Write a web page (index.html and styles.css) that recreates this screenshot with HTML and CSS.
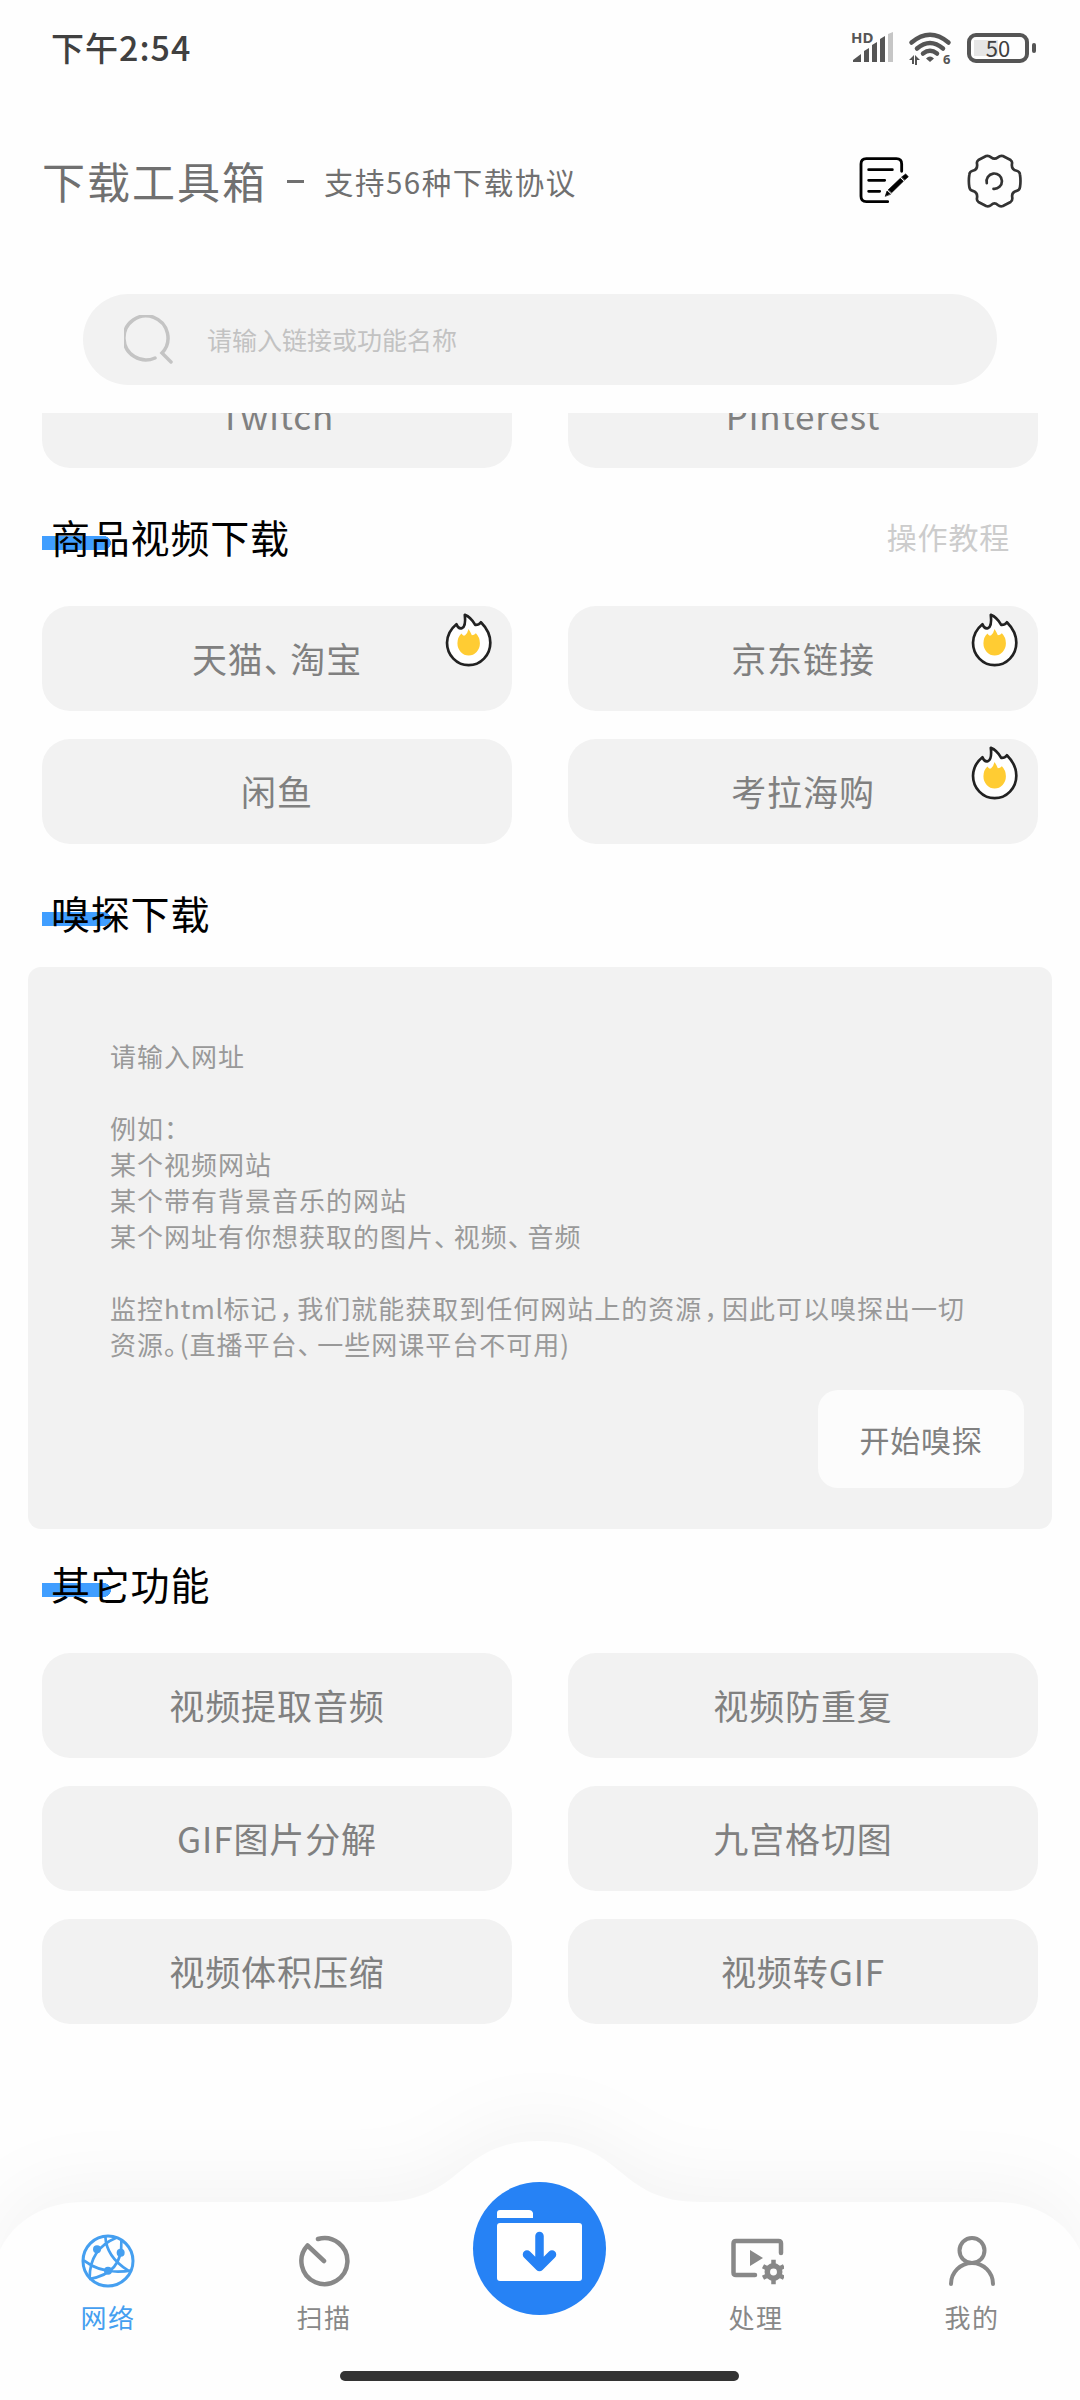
FILE: index.html
```html
<!DOCTYPE html>
<html lang="zh-CN">

<head>
    <meta charset="UTF-8">
    <meta name="viewport" content="width=device-width, initial-scale=1.0">
    <title>下载工具箱</title>
    <link rel="stylesheet" href="styles.css">
</head>

<body>
    <div class="app">
        <div class="status-bar">
            <span class="time">下午<span class="digits">2:54</span></span>
            <div class="status-icons">
                <svg class="signal" viewBox="0 0 42 34">
                    <text x="-1" y="12" class="hd">HD</text>
                    <path d="M1 31v-2l8-6v8z M12 31V20l5-3v14z M20 31V14l5-3v20z M28 31V8l5-3v26z" fill="#555"/>
                    <path d="M36 31V3l5-2v30z" fill="#c6c6c6"/>
                </svg>
                <svg class="wifi" viewBox="0 0 42 34">
                    <g fill="none" stroke="#555" stroke-width="4.500" stroke-linecap="round">
                        <path d="M2.500 11.500Q21-4 39.500 11.500"/>
                        <path d="M8 17.500Q21 6.500 34 17.500"/>
                        <path d="M14 22.500Q21 17 28 22.500"/>
                    </g>
                    <path d="M17 27.500Q21 23.500 25 27.500L21 31z" fill="#555"/>
                    <path d="M0 29l5-5v9h-2v-4z M6 24l5 5h-3v5h-2z" fill="#555"/>
                    <text x="34" y="33" class="six">6</text>
                </svg>
                <div class="battery"><span>50</span></div>
            </div>
        </div>

        <header class="header">
            <h1>下载工具箱</h1>
            <span class="dash"></span>
            <span class="subtitle">支持56种下载协议</span>
            <svg class="edit" viewBox="58 408 150 150" fill="none" stroke="#000" stroke-width="8.500" stroke-linecap="round">
                <path d="M186 454V432Q186 416 170 416H80Q64 416 64 432V529Q64 545 80 545H144"/>
                <path d="M87 449H158M87 481H135M87 514H120"/>
                <path d="M146 509L182 475L191 484L156 518Z M186 471L198 462L206 470L195 480Z M137 528L142 513L152 522Z" fill="#000" stroke="#000" stroke-width="2"/>
            </svg>
            <svg class="gear" viewBox="380 400 170 170" fill="none" stroke="#333" stroke-width="8" stroke-linecap="round" stroke-linejoin="round">
                <path d="M440 409Q448 407 455 413Q465 421 475 413Q482 407 490 409L513 421Q519 425 517 433Q515 450 531 453Q540 455 541 464Q544 484 541 502Q540 511 531 513Q515 517 518 533Q519 542 513 546L490 558Q482 561 475 555Q465 546 455 555Q448 561 440 558L417 546Q411 542 413 533Q415 517 400 513Q391 511 390 502Q387 484 390 464Q391 455 400 453Q415 450 413 433Q411 425 417 421Z"/>
                <path d="M442 490A23 23 0 1 1 462 507"/>
            </svg>
        </header>

        <div class="search">
            <svg viewBox="0 0 50 50" fill="none" stroke="#c4c4c4" stroke-width="3.500" stroke-linecap="round">
                <path d="M31 43A22 22 0 1 1 38 38L47 47"/>
            </svg>
            <span>请输入链接或功能名称</span>
        </div>

        <main class="content">
            <div class="grid cut">
                <div class="item">Twitch</div>
                <div class="item">Pinterest</div>
            </div>

            <div class="title">
                <h2>商品视频下载</h2>
                <span class="more">操作教程</span>
            </div>
            <div class="grid">
                <div class="item">天猫<span class="pause">、</span>淘宝<svg class="hot"><use href="#flame"/></svg></div>
                <div class="item">京东链接<svg class="hot"><use href="#flame"/></svg></div>
                <div class="item">闲鱼</div>
                <div class="item">考拉海购<svg class="hot"><use href="#flame"/></svg></div>
            </div>

            <div class="title">
                <h2>嗅探下载</h2>
            </div>
            <div class="sniff">
                <p>请输入网址<br><br>例如：<br>某个视频网站<br>某个带有背景音乐的网站<br>某个网址有你想获取的图片<span class="pause">、</span>视频<span class="pause">、</span>音频<br><br>监控<span class="latin">html</span>标记<span class="comma">，</span>我们就能获取到任何网站上的资源<span class="comma">，</span>因此可以嗅探出一切<br>资源<span class="stop">。</span>(直播平台<span class="pause">、</span>一些网课平台不可用)</p>
                <div class="sniff-btn">开始嗅探</div>
            </div>

            <div class="title">
                <h2>其它功能</h2>
            </div>
            <div class="grid">
                <div class="item">视频提取音频</div>
                <div class="item">视频防重复</div>
                <div class="item">GIF图片分解</div>
                <div class="item">九宫格切图</div>
                <div class="item">视频体积压缩</div>
                <div class="item">视频转GIF</div>
            </div>
        </main>

        <nav class="tabbar">
            <svg class="tabbar-bg" viewBox="0 0 1080 360">
                <path d="M0 210C15 180 45 162 85 162H380C465 162 455 101 540 101C625 101 615 162 700 162H995C1035 162 1065 180 1080 210V400H0Z"/>
            </svg>
            <div class="tabs">
                <div class="tab active">
                    <svg viewBox="61 38 168 168" fill="none" stroke="#459ff0" stroke-width="9">
                        <circle cx="145" cy="122" r="75"/>
                        <path d="M137 48Q140 110 205 150M170 52Q90 85 90 172M72 120Q130 165 216 150M88 176Q190 160 185 62" stroke-width="8"/>
                        <g fill="#459ff0" stroke="none">
                            <circle cx="112" cy="87" r="12"/>
                            <circle cx="183" cy="97" r="12"/>
                            <circle cx="145" cy="151" r="12"/>
                        </g>
                    </svg>
                    <span>网络</span>
                </div>
                <div class="tab">
                    <svg viewBox="0 0 56 56" fill="none" stroke="#888" stroke-width="4.500" stroke-linecap="round" stroke-linejoin="round">
                        <path d="M22 6A23 23 0 1 1 11.500 12.500L28 28"/>
                    </svg>
                    <span>扫描</span>
                </div>
                <div class="tab">
                    <div class="download">
                        <svg viewBox="0 0 85 72">
                            <path d="M0 8V3Q0 0 3 0H32Q35 0 36 3V8Z" fill="#fff"/>
                            <rect y="13" width="85" height="58" rx="3" fill="#fff"/>
                            <path d="M42.500 26V56M30 44.500L42.500 57L55 44.500" fill="none" stroke="#2682f5" stroke-width="8.500" stroke-linecap="round" stroke-linejoin="round"/>
                        </svg>
                    </div>
                </div>
                <div class="tab">
                    <svg viewBox="0 0 56 56" fill="none" stroke="#888" stroke-width="4.500" stroke-linecap="round">
                        <path d="M53 20V10.500Q53 8 50.500 8H8Q5.500 8 5.500 10.500V39.500Q5.500 42 8 42H27"/>
                        <path d="M22 17L35 25L22 33Z" fill="#888" stroke="none"/>
                        <circle cx="45.500" cy="39" r="6.200" stroke-width="5.500"/>
                        <path d="M45.500 29V31M45.500 49V47M37 34.200L38.500 35M54 43.800L52.500 43M37 43.800L38.500 43M54 34.200L52.500 35" stroke-linecap="square"/>
                    </svg>
                    <span>处理</span>
                </div>
                <div class="tab">
                    <svg viewBox="0 0 56 56" fill="none" stroke="#888" stroke-width="4" stroke-linecap="round">
                        <circle cx="28" cy="17.500" r="12.500"/>
                        <path d="M7 51A21 21 0 0 1 49 51"/>
                    </svg>
                    <span>我的</span>
                </div>
            </div>
            <div class="home-line"></div>
        </nav>
    </div>

    <svg class="sprite">
        <symbol id="flame" viewBox="48 40 140 160">
            <path d="M107 45Q125 52 138 75Q148 76 155 67Q183 95 183 128A64.500 67 0 0 1 54 128Q55 95 82 73Q88 88 98 85Q111 80 107 45Z" fill="#fff" stroke="#222" stroke-width="8" stroke-linejoin="round"/>
            <path d="M118 87Q124 96 128 106Q135 106 140 100Q152 112 152 130A33.500 36 0 0 1 85 130Q85 112 97 101Q102 110 108 106Q115 100 118 87Z" fill="#ffcc33"/>
        </symbol>
    </svg>
</body>

</html>
```
FILE: styles.css
```css
*{
    margin: 0;
    padding: 0;
    box-sizing: border-box;
}
body{
    font-family: "Noto Sans CJK SC", sans-serif;
    background-color: #fefefe;
    color: #808080;
}
svg{
    display: block;
}
.app{
    position: relative;
    width: 1080px;
    height: 2400px;
    overflow: hidden;
    display: flex;
    flex-direction: column;
    background-color: #fefefe;
}

/* status bar */
.status-bar{
    height: 96px;
    padding: 0 44px 0 51px;
    display: flex;
    align-items: center;
    justify-content: space-between;
}
.time{
    padding-bottom: 3px;
    color: #404040;
    font-size: 33px;
    font-weight: 500;
    letter-spacing: 1px;
}
.digits{
    font-size: 34px;
}
.status-icons{
    display: flex;
    align-items: center;
    gap: 15px;
}
.signal,
.wifi{
    width: 42px;
    height: 34px;
    overflow: visible;
}
.hd,
.six{
    font-family: "Noto Sans", sans-serif;
    font-weight: 700;
    font-size: 15px;
    fill: #555;
}
.six{
    font-size: 13px;
}
.battery{
    position: relative;
    width: 62px;
    height: 30px;
    margin: 0 7px 0 1px;
    border: 4px solid #555;
    border-radius: 9px;
    display: flex;
    align-items: center;
    justify-content: center;
    background: linear-gradient(#e6e6e6, #e6e6e6) 3px 3px / 24px 16px no-repeat;
    color: #404040;
    font-size: 22px;
    line-height: 20px;
}
.battery span{
    padding-bottom: 2px;
}
.battery::after{
    content: "";
    position: absolute;
    right: -11px;
    top: 6px;
    width: 4px;
    height: 10px;
    border-radius: 2px;
    background-color: #555;
}

/* header */
.header{
    height: 172px;
    padding: 0 57px 2px 42px;
    display: flex;
    align-items: center;
    color: #707070;
}
.header h1{
    padding-bottom: 2px;
    font-size: 43px;
    font-weight: 400;
    letter-spacing: 2px;
}
.dash{
    width: 17px;
    height: 3px;
    margin: 0 20px 0 20px;
    background-color: #707070;
}
.subtitle{
    padding-bottom: 1px;
    font-size: 29.500px;
    letter-spacing: 1.500px;
}
.edit{
    width: 50px;
    height: 50px;
    margin-left: auto;
}
.gear{
    width: 57px;
    height: 57px;
    margin-left: 57px;
}

/* search */
.search{
    height: 91px;
    margin: 26px 83px 28px;
    padding-left: 41px;
    border-radius: 46px;
    background-color: #f2f2f2;
    display: flex;
    align-items: center;
    color: #c2c2c2;
    font-size: 25px;
}
.search svg{
    width: 50px;
    height: 50px;
    margin-right: 33px;
}
.search span{
    padding-bottom: 1px;
}

/* content */
.content{
    flex: 1;
    overflow: hidden;
}
.grid{
    display: grid;
    grid-template-columns: 1fr 1fr;
    gap: 28px 56px;
    padding: 0 42px;
}
.cut{
    margin-top: -50px;
}
.item{
    position: relative;
    height: 105px;
    padding-bottom: 3px;
    border-radius: 28px;
    background-color: #f2f2f2;
    display: flex;
    align-items: center;
    justify-content: center;
    font-size: 35px;
    letter-spacing: 0.900px;
}
.hot{
    position: absolute;
    right: 20px;
    top: 7px;
    width: 47px;
    height: 54px;
}
.pause{
    letter-spacing: -0.240em;
}
.comma{
    padding-left: 2px;
    letter-spacing: -0.320em;
}
.stop{
    letter-spacing: -0.400em;
}
.title{
    height: 60px;
    margin: 40px 42px 38px;
    padding: 0 28px 4px 9px;
    display: flex;
    align-items: center;
    justify-content: space-between;
    background: linear-gradient(#409eff, #409eff) 0 28px / 62px 14px no-repeat,
        radial-gradient(ellipse 7px 7px at 62px 35px, #409eff 98%, transparent) no-repeat;
}
.title h2{
    color: #000;
    font-size: 39px;
    font-weight: 400;
    letter-spacing: 0.800px;
}
.more{
    color: #ccc;
    font-size: 30px;
    letter-spacing: 0.800px;
}
.sniff{
    height: 562px;
    margin: -15px 28px -14px;
    padding: 71px 28px 41px 82px;
    border-radius: 13px;
    background-color: #f2f2f2;
    display: flex;
    flex-direction: column;
    justify-content: space-between;
}
.sniff p{
    color: #999;
    font-size: 26px;
    line-height: 36px;
    letter-spacing: 1px;
    white-space: nowrap;
}
.latin{
    letter-spacing: 0.600px;
}
.sniff-btn{
    align-self: flex-end;
    width: 206px;
    height: 98px;
    padding-bottom: 1px;
    border-radius: 20px;
    background-color: #fcfcfc;
    display: flex;
    align-items: center;
    justify-content: center;
    font-size: 30px;
    letter-spacing: 0.800px;
}

/* bottom tabs */
.tabbar{
    position: absolute;
    left: 0;
    bottom: 0;
    width: 1080px;
    height: 360px;
}
.tabbar-bg{
    position: absolute;
    left: 0;
    top: 0;
    width: 1080px;
    height: 360px;
    overflow: visible;
    fill: #fefefe;
    filter: drop-shadow(0 -18px 34px rgba(0, 0, 0, 0.038));
}
.tabs{
    position: relative;
    display: grid;
    grid-template-columns: repeat(5, 1fr);
    padding-top: 193px;
}
.tab{
    display: flex;
    flex-direction: column;
    align-items: center;
    gap: 13px;
    color: #888;
    font-size: 26px;
    line-height: 30px;
    letter-spacing: 1.500px;
}
.tab > svg{
    width: 56px;
    height: 56px;
}
.active{
    color: #459ff0;
}
.download{
    width: 133px;
    height: 133px;
    margin: -51px 1px 0 0;
    border-radius: 50%;
    background-color: #2682f5;
    display: flex;
    align-items: center;
    justify-content: center;
}
.download svg{
    width: 85px;
    height: 72px;
    margin-bottom: 6px;
}
.home-line{
    position: absolute;
    left: 340px;
    bottom: 19px;
    width: 399px;
    height: 10px;
    border-radius: 5px;
    background-color: #333;
}
.sprite{
    position: absolute;
    width: 0;
    height: 0;
}
```
